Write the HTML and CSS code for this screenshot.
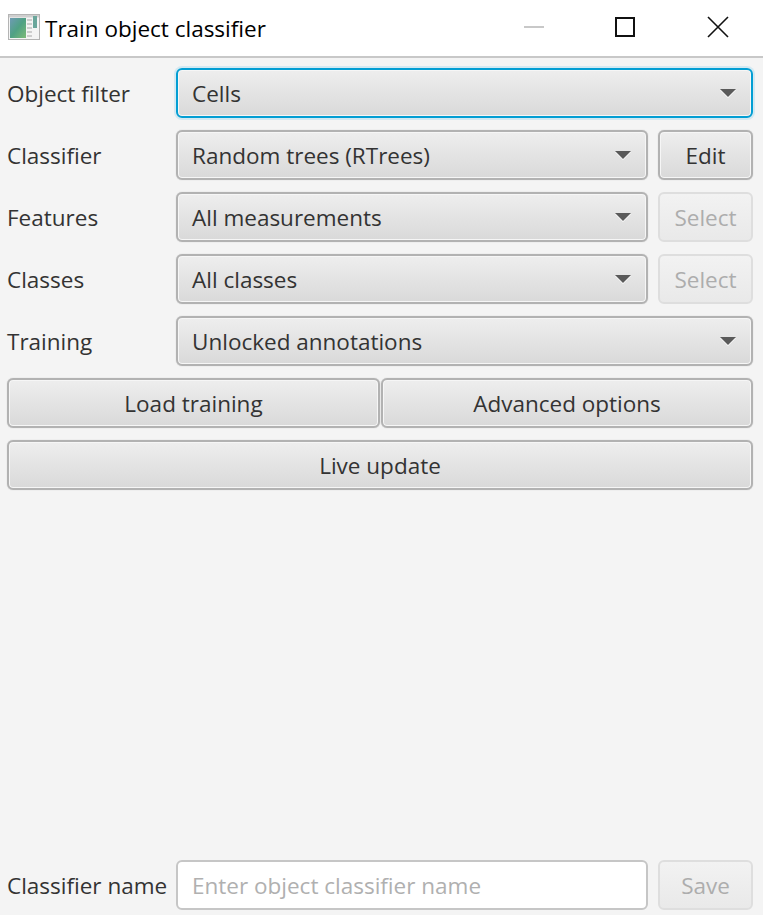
FILE: index.html
```html
<!DOCTYPE html>
<html lang="en">
<head>
    <meta charset="UTF-8">
    <meta name="viewport" content="width=device-width, initial-scale=1.0">
    <title>Train object classifier</title>
    <link rel="stylesheet" href="styles.css">
</head>
<body>
    <div class="window">
        <div class="titlebar">
            <svg class="app-icon" width="32" height="26" viewBox="0 0 32 26">
                <defs>
                    <linearGradient id="pane" x1="0" y1="0" x2="1" y2="1">
                        <stop offset="0" stop-color="#6f9bb5"/>
                        <stop offset="0.5" stop-color="#4fa184"/>
                        <stop offset="1" stop-color="#7dbb78"/>
                    </linearGradient>
                </defs>
                <rect x="0.5" y="0.5" width="31" height="25" fill="#f4f4f4" stroke="#b4b4b4"/>
                <rect x="1" y="1" width="30" height="2.5" fill="#cfcfcf"/>
                <rect x="2" y="4" width="16" height="20" fill="url(#pane)"/>
                <rect x="25" y="2" width="4" height="12" fill="#6aa69b"/>
                <path d="M19 6h5M19 10h5M19 14h5M19 18h5M19 22h5" stroke="#cdcdcd" stroke-width="2"/>
            </svg>
            <span class="title">Train object classifier</span>
            <div class="window-btns">
                <svg width="22" height="22" viewBox="0 0 22 22"><path d="M1 11h20" stroke="#c8c8c8" stroke-width="2"/></svg>
                <svg width="22" height="22" viewBox="0 0 22 22"><rect x="2" y="2" width="18" height="18" fill="none" stroke="#111" stroke-width="2"/></svg>
                <svg class="close-icon" width="22" height="22" viewBox="0 0 22 22"><path d="M1 1l20 20M21 1L1 21" stroke="#111" stroke-width="1.6"/></svg>
            </div>
        </div>

        <div class="content">
            <div class="form-row">
                <label>Object filter</label>
                <div class="combo focused"><span>Cells</span><i class="arrow"></i></div>
            </div>
            <div class="form-row with-btn">
                <label>Classifier</label>
                <div class="combo"><span>Random trees (RTrees)</span><i class="arrow"></i></div>
                <button class="btn">Edit</button>
            </div>
            <div class="form-row with-btn">
                <label>Features</label>
                <div class="combo"><span>All measurements</span><i class="arrow"></i></div>
                <button class="btn" disabled>Select</button>
            </div>
            <div class="form-row with-btn">
                <label>Classes</label>
                <div class="combo"><span>All classes</span><i class="arrow"></i></div>
                <button class="btn" disabled>Select</button>
            </div>
            <div class="form-row">
                <label>Training</label>
                <div class="combo"><span>Unlocked annotations</span><i class="arrow"></i></div>
            </div>
            <div class="btn-pair">
                <button class="btn">Load training</button>
                <button class="btn">Advanced options</button>
            </div>
            <button class="btn">Live update</button>

            <div class="form-row with-btn bottom">
                <label>Classifier name</label>
                <input type="text" class="name-input" placeholder="Enter object classifier name">
                <button class="btn" disabled>Save</button>
            </div>
        </div>
    </div>
</body>
</html>
```

FILE: styles.css
```css
* {
    box-sizing: border-box;
}
html, body {
    margin: 0;
    height: 100%;
    overflow: hidden;
}
body {
    font-family: "Open Sans", "Noto Sans", sans-serif;
    font-size: 22.5px;
    background-color: #f4f4f4;
    color: #333;
}
.window {
    height: 915px;
    display: flex;
    flex-direction: column;
}
.titlebar {
    height: 58px;
    flex: none;
    display: flex;
    align-items: center;
    padding: 0 34px 2px 8px;
    background-color: #fff;
    border-bottom: 2px solid #c8c8c8;
    color: #000;
}
.app-icon {
    flex: none;
    margin-right: 5px;
}
.title {
    flex: 1;
    margin-top: 2px;
}
.window-btns {
    display: flex;
    gap: 69px;
}
.window-btns svg {
    display: block;
}
.window-btns .close-icon {
    margin-left: 2px;
}
.content {
    flex: 1;
    display: flex;
    flex-direction: column;
    gap: 12px;
    padding: 10px 10px 5px 7px;
}
.form-row {
    display: grid;
    grid-template-columns: 169px 1fr;
    align-items: center;
    height: 50px;
}
.form-row.with-btn {
    grid-template-columns: 169px 472px 105px;
}
.with-btn .btn {
    width: 95px;
    margin-left: 10px;
}
.bottom {
    margin-top: auto;
}
.combo, .btn {
    height: 50px;
    border: 2px solid #b2b2b2;
    border-radius: 6px;
    background: linear-gradient(#eeeeee, #d9d9d9);
    box-shadow: 0 0 1px #b2b2b2, inset 0 0 0 1px #f6f6f6;
    color: #333;
    font-family: inherit;
    font-size: 22.5px;
}
.combo {
    display: flex;
    align-items: center;
    justify-content: space-between;
    padding: 0 15px 0 14px;
}
.combo.focused {
    border-color: #039ed3;
    box-shadow: 0 0 0 2px #d3e9f2, inset 0 0 0 1px #f6f6f6;
}
.arrow {
    width: 0;
    height: 0;
    border-left: 8px solid transparent;
    border-right: 8px solid transparent;
    border-top: 8px solid #5a5a5a;
    filter: drop-shadow(0 1px 0 #fff);
}
.btn {
    padding: 0;
    width: 100%;
}
.btn:disabled {
    border-color: #dedede;
    background: linear-gradient(#f2f2f2, #e9e9e9);
    box-shadow: none;
    color: #adadad;
}
.btn-pair {
    display: grid;
    grid-template-columns: 373px 372px;
    column-gap: 1px;
}
.name-input {
    height: 50px;
    width: 100%;
    padding: 0 14px;
    border: 2px solid #c6c6c6;
    border-radius: 6px;
    background-color: #fff;
    font-family: inherit;
    font-size: 22.5px;
    outline: none;
}
.name-input::placeholder {
    color: #b0b0b0;
    opacity: 1;
}
```
